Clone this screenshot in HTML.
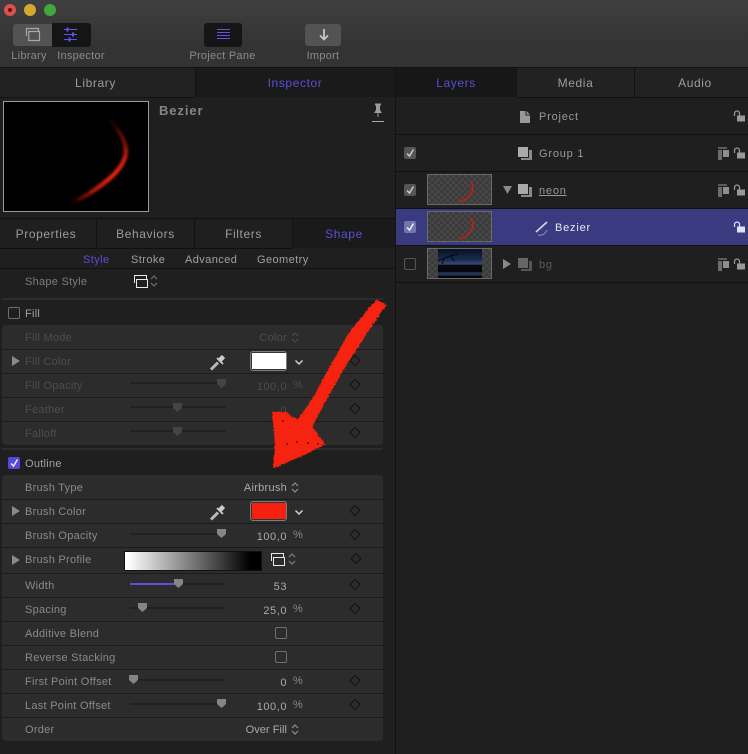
<!DOCTYPE html>
<html><head><meta charset="utf-8"><style>
html,body{margin:0;padding:0;background:#1e1e1e}
#p{position:relative;width:748px;height:754px;overflow:hidden;background:#1f1f1f;font:11px "Liberation Sans",sans-serif;letter-spacing:.27px;color:#8a8a8a}
#p div,#p span,#p svg{position:absolute}
.t{white-space:nowrap;line-height:14px;margin-top:1px}
.r{text-align:right}
.c{text-align:center}
.v{letter-spacing:.55px;margin-top:1px}
.sub{letter-spacing:.42px}
.lay{letter-spacing:.8px}
.tab{font-size:12px;letter-spacing:.6px;color:#9c9c9c;line-height:16px;text-align:center;white-space:nowrap}
.b{color:#5a4fd8}
.line{background:#111}
.hl{height:1px;left:2px;width:381px;background:#1b1b1b}
.panel{left:2px;width:381px;background:#2c2c2c;border-radius:4px}
.d{color:#4d4d4d}
.sl{height:2px;background:#212121;border-radius:1px}
.ck{width:10px;height:10px;border:1px solid #6e6e6e;border-radius:2px}
.row2{left:396px;width:352px;height:1px;background:#111}
.th{width:63px;height:29px;border:1px solid #6a6a6a;background:#464646;background-image:linear-gradient(45deg,#3b3b3b 25%,transparent 25%,transparent 75%,#3b3b3b 75%),linear-gradient(45deg,#3b3b3b 25%,transparent 25%,transparent 75%,#3b3b3b 75%);background-size:6px 6px;background-position:0 0,3px 3px}
</style></head><body><div id="p">

<!-- toolbar -->
<div style="left:0;top:0;width:748px;height:67px;background:linear-gradient(#3f3f3f,#333 70%)"></div>
<div style="left:4px;top:4px;width:12px;height:12px;border-radius:50%;background:#d9514d"></div>
<div style="left:8px;top:8px;width:4px;height:4px;border-radius:50%;background:#641010"></div>
<div style="left:24px;top:4px;width:12px;height:12px;border-radius:50%;background:#d4a92e"></div>
<div style="left:44px;top:4px;width:12px;height:12px;border-radius:50%;background:#3fa73f"></div>

<div style="left:13px;top:24px;width:39px;height:22px;background:#535353;border-radius:3px 0 0 3px"></div>
<div style="left:52px;top:23px;width:39px;height:24px;background:#151515;border-radius:0 3px 3px 0"></div>
<svg style="left:25px;top:27px" width="16" height="16" fill="none" stroke="#a8a8a8" stroke-width="1.200"><path d="M1.500 9V1.500H13.500V4"/><path d="M3.800 4.500H14.500V13.500H3.800Z"/></svg>
<svg style="left:63px;top:27px" width="16" height="16"><path d="M1 2.500H14M1 7.500H14M1 12.500H14" fill="none" stroke="#5f53ea"/><path d="M3.500 .5H5.500V4.500H3.500ZM9 5.500H11V9.500H9ZM5.500 10.500H7.500V14.500H5.500Z" fill="#5f53ea"/></svg>
<div class="t c" style="left:4px;top:48px;width:50px">Library</div>
<div class="t c" style="left:50px;top:48px;width:62px">Inspector</div>

<div style="left:204px;top:23px;width:38px;height:24px;background:#151515;border-radius:3px"></div>
<svg style="left:216px;top:28px" width="15" height="13" stroke="#5f53ea"><path d="M1 1.500H14M1 4.500H14M1 7.500H14M1 10.500H14"/></svg>
<div class="t c" style="left:180px;top:48px;width:85px">Project Pane</div>

<div style="left:305px;top:24px;width:36px;height:22px;background:#535353;border-radius:3px"></div>
<svg style="left:317px;top:28px" width="14" height="14" fill="none" stroke="#c6c6c6" stroke-width="1.800"><path d="M7 1V11M3 7.500L7 11.500L11 7.500"/></svg>
<div class="t c" style="left:300px;top:48px;width:46px">Import</div>

<div class="line" style="left:0;top:67px;width:748px;height:1px"></div>

<!-- left tabs -->
<div style="left:0;top:68px;width:195px;height:29px;background:#222"></div>
<div style="left:195px;top:68px;width:200px;height:29px;background:#1a1a1a"></div>
<div class="line" style="left:0;top:97px;width:195px;height:1px"></div>
<div class="line" style="left:195px;top:68px;width:1px;height:30px"></div>
<div class="tab" style="left:0;top:75px;width:191px">Library</div>
<div class="tab b" style="left:195px;top:75px;width:200px">Inspector</div>

<!-- vertical divider -->
<div class="line" style="left:395px;top:68px;width:1px;height:686px"></div>

<!-- preview -->
<div style="left:3px;top:101px;width:144px;height:109px;background:#000;border:1px solid #9a9a9a"></div>
<svg style="left:4px;top:102px" width="144" height="109">
<defs><filter id="bl" x="-30%" y="-30%" width="160%" height="160%"><feGaussianBlur stdDeviation="1.200"/></filter>
<linearGradient id="gr" gradientUnits="userSpaceOnUse" x1="108" y1="20" x2="68" y2="101"><stop offset="0" stop-color="#1c0300"/><stop offset=".3" stop-color="#d01c0a"/><stop offset=".55" stop-color="#f0240c"/><stop offset=".75" stop-color="#b8180a"/><stop offset="1" stop-color="#0c0100"/></linearGradient></defs>
<path d="M108 20C116 29 122 40 122 50C121 62 112 72 100 81C90 89 79 96 68 101" fill="none" stroke="url(#gr)" stroke-width="4.500" stroke-linecap="round" filter="url(#bl)"/>
</svg>
<div class="t" style="left:159px;top:102px;font-size:13px;font-weight:bold;color:#868686;letter-spacing:.9px;line-height:16px">Bezier</div>
<svg style="left:371px;top:103px" width="14" height="20"><path d="M4 .5H10V2L9 3V7L11 10H3L5 7V3L4 2Z" fill="#9c9c9c"/><path d="M7 10V14" stroke="#999"/><path d="M1 18.500H13" stroke="#aaa"/></svg>

<!-- sub tabs -->
<div class="line" style="left:0;top:218px;width:395px;height:1px"></div>
<div style="left:293px;top:219px;width:102px;height:29px;background:#1a1a1a"></div>
<div class="line" style="left:0;top:248px;width:293px;height:1px"></div>
<div class="line" style="left:96px;top:219px;width:1px;height:29px"></div>
<div class="line" style="left:194px;top:219px;width:1px;height:29px"></div>
<div class="line" style="left:292px;top:219px;width:1px;height:29px"></div>
<div class="tab" style="left:0;top:226px;width:92px">Properties</div>
<div class="tab" style="left:97px;top:226px;width:97px">Behaviors</div>
<div class="tab" style="left:195px;top:226px;width:97px">Filters</div>
<div class="tab b" style="left:293px;top:226px;width:102px">Shape</div>

<div class="t b sub" style="left:83px;top:252px">Style</div>
<div class="t sub" style="left:131px;top:252px;color:#a0a0a0">Stroke</div>
<div class="t sub" style="left:185px;top:252px;color:#a0a0a0">Advanced</div>
<div class="t sub" style="left:257px;top:252px;color:#a0a0a0">Geometry</div>
<div class="line" style="left:0;top:268px;width:395px;height:1px"></div>

<div class="t" style="left:25px;top:274px;color:#7c7c7c">Shape Style</div>
<svg style="left:134px;top:274px" width="25" height="15" fill="none" stroke="#e8e8e8"><path d="M.5 9V1.500H12.500V5"/><path d="M2.500 5.500H13.500V13.500H2.500Z"/><path d="M17 5L20 2L23 5M17 9L20 12L23 9" stroke="#666" stroke-width="1.300"/></svg>
<div style="left:2px;top:298px;width:381px;height:2px;background:#2c2c2c"></div>

<!-- Fill -->
<div class="ck" style="left:8px;top:307px"></div>
<div class="t" style="left:25px;top:306px;color:#a2a2a2">Fill</div>
<div class="panel" style="top:325px;height:120px"></div>
<div class="hl" style="top:349px"></div><div class="hl" style="top:373px"></div><div class="hl" style="top:397px"></div><div class="hl" style="top:421px"></div>
<div class="t d" style="left:25px;top:330px">Fill Mode</div>
<div class="t d" style="left:25px;top:354px">Fill Color</div>
<div class="t d" style="left:25px;top:378px">Fill Opacity</div>
<div class="t d" style="left:25px;top:402px">Feather</div>
<div class="t d" style="left:25px;top:426px">Falloff</div>
<div class="t d r" style="left:227px;top:330px;width:60px">Color</div>
<svg style="left:291px;top:332px" width="9" height="11" fill="none" stroke="#4d4d4d"><path d="M1 4L4 1L7 4M1 7L4 10L7 7"/></svg>
<svg style="left:12px;top:356px" width="9" height="10"><path d="M0 0L8 5L0 10Z" fill="#8a8a8a"/></svg>
<svg style="left:209px;top:354px" width="18" height="18" fill="none"><path d="M2 15.500L9 8.500" stroke="#b8b8b8" stroke-width="3"/><path d="M11 6L14.500 2.500" stroke="#cdcdcd" stroke-width="4.500"/><path d="M8 4L14 10" stroke="#cdcdcd" stroke-width="1.800"/></svg>
<div style="left:250px;top:351px;width:37px;height:20px;background:#333;border:1px solid #7c7c7c;border-radius:3px;box-sizing:border-box"></div>
<div style="left:252px;top:353px;width:34px;height:16px;background:#fff"></div>
<svg style="left:294px;top:359px" width="10" height="8" fill="none" stroke="#d0d0d0" stroke-width="1.500"><path d="M1.500 1.500L5 5L8.500 1.500"/></svg>
<div class="sl" style="left:130px;top:382px;width:96px"></div>
<div class="sl" style="left:130px;top:406px;width:96px"></div>
<div class="sl" style="left:130px;top:430px;width:96px"></div>
<svg style="left:216px;top:378px" width="11" height="11"><path d="M1 1H10V6L5.500 10L1 6Z" fill="#444"/></svg>
<svg style="left:172px;top:402px" width="11" height="11"><path d="M1 1H10V6L5.500 10L1 6Z" fill="#444"/></svg>
<svg style="left:172px;top:426px" width="11" height="11"><path d="M1 1H10V6L5.500 10L1 6Z" fill="#444"/></svg>
<div class="t d r v" style="left:227px;top:379px;width:60px">100,0</div>
<div class="t d" style="left:293px;top:377px">%</div>
<div class="t d r v" style="left:227px;top:403px;width:60px">0</div>

<div style="left:2px;top:448px;width:381px;height:2px;background:#2c2c2c"></div>

<!-- Outline -->
<div style="left:8px;top:457px;width:12px;height:12px;background:#5548e0;border-radius:2px"></div>
<svg style="left:8px;top:457px" width="12" height="12" fill="none" stroke="#eee" stroke-width="1.500"><path d="M3 6.500L5.500 9L9.500 2.500"/></svg>
<div class="t" style="left:25px;top:456px;color:#a2a2a2">Outline</div>
<div class="panel" style="top:475px;height:266px"></div>
<div class="hl" style="top:499px"></div><div class="hl" style="top:523px"></div><div class="hl" style="top:547px"></div><div class="hl" style="top:573px"></div><div class="hl" style="top:597px"></div><div class="hl" style="top:621px"></div><div class="hl" style="top:645px"></div><div class="hl" style="top:669px"></div><div class="hl" style="top:693px"></div><div class="hl" style="top:717px"></div>

<div class="t" style="left:25px;top:480px">Brush Type</div>
<div class="t" style="left:25px;top:504px">Brush Color</div>
<div class="t" style="left:25px;top:528px">Brush Opacity</div>
<div class="t" style="left:25px;top:552px">Brush Profile</div>
<div class="t" style="left:25px;top:578px">Width</div>
<div class="t" style="left:25px;top:602px">Spacing</div>
<div class="t" style="left:25px;top:626px">Additive Blend</div>
<div class="t" style="left:25px;top:650px">Reverse Stacking</div>
<div class="t" style="left:25px;top:674px">First Point Offset</div>
<div class="t" style="left:25px;top:698px">Last Point Offset</div>
<div class="t" style="left:25px;top:722px">Order</div>

<div class="t r" style="left:217px;top:480px;width:70px;color:#aaa">Airbrush</div>
<svg style="left:291px;top:482px" width="9" height="11" fill="none" stroke="#999"><path d="M1 4L4 1L7 4M1 7L4 10L7 7"/></svg>
<svg style="left:12px;top:506px" width="9" height="10"><path d="M0 0L8 5L0 10Z" fill="#8a8a8a"/></svg>
<svg style="left:209px;top:504px" width="18" height="18" fill="none"><path d="M2 15.500L9 8.500" stroke="#b8b8b8" stroke-width="3"/><path d="M11 6L14.500 2.500" stroke="#cdcdcd" stroke-width="4.500"/><path d="M8 4L14 10" stroke="#cdcdcd" stroke-width="1.800"/></svg>
<div style="left:250px;top:501px;width:37px;height:20px;background:#333;border:1px solid #7c7c7c;border-radius:3px;box-sizing:border-box"></div>
<div style="left:252px;top:503px;width:34px;height:16px;background:#f5200f"></div>
<svg style="left:294px;top:509px" width="10" height="8" fill="none" stroke="#d0d0d0" stroke-width="1.500"><path d="M1.500 1.500L5 5L8.500 1.500"/></svg>

<div class="sl" style="left:130px;top:533px;width:96px"></div>
<svg style="left:216px;top:528px" width="11" height="11"><path d="M1 1H10V6L5.500 10L1 6Z" fill="#858585"/></svg>
<div class="t r v" style="left:227px;top:529px;width:60px;color:#aaa">100,0</div>
<div class="t" style="left:293px;top:527px">%</div>

<svg style="left:12px;top:555px" width="9" height="10"><path d="M0 0L8 5L0 10Z" fill="#8a8a8a"/></svg>
<div style="left:124px;top:551px;width:138px;height:20px;background:linear-gradient(90deg,#fff 2%,#000 92%);box-sizing:border-box;border:1px solid #111"></div>
<svg style="left:271px;top:552px" width="28" height="15" fill="none" stroke="#e8e8e8"><path d="M.5 9V1.500H12.500V5"/><path d="M2.500 5.500H13.500V13.500H2.500Z"/><path d="M18 5L21 2L24 5M18 9L21 12L24 9" stroke="#777" stroke-width="1.300"/></svg>

<div class="sl" style="left:130px;top:583px;width:95px"></div>
<div style="left:130px;top:583px;width:48px;height:2px;background:#5a4fe0"></div>
<svg style="left:173px;top:578px" width="11" height="11"><path d="M1 1H10V6L5.500 10L1 6Z" fill="#858585"/></svg>
<div class="t r v" style="left:227px;top:579px;width:60px;color:#aaa">53</div>

<div class="sl" style="left:130px;top:607px;width:95px"></div>
<svg style="left:137px;top:602px" width="11" height="11"><path d="M1 1H10V6L5.500 10L1 6Z" fill="#858585"/></svg>
<div class="t r v" style="left:227px;top:603px;width:60px;color:#aaa">25,0</div>
<div class="t" style="left:293px;top:601px">%</div>

<div class="ck" style="left:275px;top:627px"></div>
<div class="ck" style="left:275px;top:651px"></div>

<div class="sl" style="left:130px;top:679px;width:95px"></div>
<svg style="left:128px;top:674px" width="11" height="11"><path d="M1 1H10V6L5.500 10L1 6Z" fill="#858585"/></svg>
<div class="t r v" style="left:227px;top:675px;width:60px;color:#aaa">0</div>
<div class="t" style="left:293px;top:673px">%</div>

<div class="sl" style="left:130px;top:703px;width:95px"></div>
<svg style="left:216px;top:698px" width="11" height="11"><path d="M1 1H10V6L5.500 10L1 6Z" fill="#858585"/></svg>
<div class="t r v" style="left:227px;top:699px;width:60px;color:#aaa">100,0</div>
<div class="t" style="left:293px;top:697px">%</div>

<div class="t r" style="left:217px;top:722px;width:70px;color:#aaa;letter-spacing:.05px">Over Fill</div>
<svg style="left:291px;top:724px" width="9" height="11" fill="none" stroke="#999"><path d="M1 4L4 1L7 4M1 7L4 10L7 7"/></svg>

<!-- keyframe diamonds -->
<svg style="left:348px;top:352px" width="15" height="370" fill="none" stroke="#131313"><path d="M7 3.500L12 8.500L7 13.500L2 8.500ZM7 27.500L12 32.500L7 37.500L2 32.500ZM7 51.500L12 56.500L7 61.500L2 56.500ZM7 75.500L12 80.500L7 85.500L2 80.500ZM7 153.500L12 158.500L7 163.500L2 158.500ZM7 177.500L12 182.500L7 187.500L2 182.500ZM7 227.500L12 232.500L7 237.500L2 232.500ZM7 251.500L12 256.500L7 261.500L2 256.500ZM7 323.500L12 328.500L7 333.500L2 328.500ZM7 347.500L12 352.500L7 357.500L2 352.500Z"/><path d="M8 201.500L13 206.500L8 211.500L3 206.500Z"/></svg>

<!-- right tabs -->
<div style="left:396px;top:68px;width:121px;height:29px;background:#171717"></div>
<div style="left:517px;top:68px;width:231px;height:29px;background:#222"></div>
<div class="line" style="left:517px;top:97px;width:231px;height:1px"></div>
<div class="line" style="left:634px;top:68px;width:1px;height:29px"></div>
<div class="tab b" style="left:396px;top:75px;width:120px">Layers</div>
<div class="tab" style="left:517px;top:75px;width:117px">Media</div>
<div class="tab" style="left:635px;top:75px;width:120px">Audio</div>

<!-- layers -->
<div class="row2" style="top:134px"></div>
<div class="row2" style="top:171px"></div>
<div class="row2" style="top:208px"></div>
<div class="row2" style="top:245px"></div>
<div class="row2" style="top:282px"></div>
<div style="left:396px;top:209px;width:352px;height:36px;background:#393a80"></div>

<svg style="left:520px;top:111px" width="11" height="12"><path d="M0 0H5.500V4.500H10V12H0Z" fill="#999"/><path d="M6.500 0L10 3.500H6.500Z" fill="#999"/></svg>
<div class="t lay" style="left:539px;top:109px;color:#9a9a9a">Project</div>

<div style="left:404px;top:147px;width:12px;height:12px;background:#555;border-radius:2px"></div>
<div style="left:404px;top:184px;width:12px;height:12px;background:#555;border-radius:2px"></div>
<div style="left:404px;top:221px;width:12px;height:12px;background:#7175b0;border-radius:2px"></div>
<svg style="left:404px;top:147px" width="12" height="12" fill="none" stroke="#c8c8c8" stroke-width="1.500"><path d="M3 6.500L5.500 9L9.500 2.500"/></svg>
<svg style="left:404px;top:184px" width="12" height="12" fill="none" stroke="#c8c8c8" stroke-width="1.500"><path d="M3 6.500L5.500 9L9.500 2.500"/></svg>
<svg style="left:404px;top:221px" width="12" height="12" fill="none" stroke="#eee" stroke-width="1.500"><path d="M3 6.500L5.500 9L9.500 2.500"/></svg>
<div class="ck" style="left:404px;top:258px;border-color:#555"></div>

<svg style="left:518px;top:147px" width="14" height="13"><path d="M0 0H10V10H0Z" fill="#aaa"/><path d="M11 3H14V13H3V11H11Z" fill="#8a8a8a"/></svg>
<div class="t lay" style="left:539px;top:146px;color:#9a9a9a">Group 1</div>

<div class="th" style="left:427px;top:174px"></div>
<svg style="left:428px;top:175px" width="63" height="29" fill="none"><path d="M43 6C46 12 45 17 42 20C39 24 35 26 31 27" stroke="#c81c10" stroke-width="1.500"/></svg>
<svg style="left:503px;top:186px" width="10" height="8"><path d="M0 0H9L4.500 8Z" fill="#8a8a8a"/></svg>
<svg style="left:518px;top:184px" width="14" height="13"><path d="M0 0H10V10H0Z" fill="#aaa"/><path d="M11 3H14V13H3V11H11Z" fill="#8a8a8a"/></svg>
<div class="t lay" style="left:539px;top:183px;color:#9a9a9a;text-decoration:underline">neon</div>

<div class="th" style="left:427px;top:211px"></div>
<svg style="left:428px;top:212px" width="63" height="29" fill="none"><path d="M43 6C46 12 45 17 42 20C39 24 35 26 31 27" stroke="#c81c10" stroke-width="1.500"/></svg>
<svg style="left:533px;top:220px" width="16" height="16" fill="none"><path d="M3 12L14 2" stroke="#d0d0e4" stroke-width="1.800"/><path d="M5 15C9 16 12 14 14 10" stroke="#8a8bc0"/></svg>
<div class="t lay" style="left:555px;top:220px;color:#e8e8f0">Bezier</div>

<div class="th" style="left:427px;top:248px"></div>
<div style="left:438px;top:249px;width:44px;height:29px;background:linear-gradient(#091022 0,#162a4e 35%,#364a70 52%,#08080e 56%,#06060c 78%,#243352 82%,#243352 90%,#050508 94%)"></div>
<svg style="left:438px;top:249px" width="44" height="29" fill="none" stroke="#05050a"><path d="M0 12L12 7L20 5M6 10L4 15M13 7L16 12"/></svg>
<svg style="left:503px;top:259px" width="9" height="10"><path d="M0 0L8 5L0 10Z" fill="#8a8a8a"/></svg>
<svg style="left:518px;top:258px" width="14" height="13"><path d="M0 0H10V10H0Z" fill="#666"/><path d="M11 3H14V13H3V11H11Z" fill="#555"/></svg>
<div class="t lay" style="left:539px;top:257px;color:#5a5a5a">bg</div>

<!-- layer right icons -->
<svg style="left:718px;top:147px" width="12" height="14"><path d="M0 0H9V2H0Z" fill="#5c5c5c"/><path d="M0 3H4V13H0Z" fill="#6c6c6c"/><path d="M5 3H11V10H5Z" fill="#8e8e8e"/></svg>
<svg style="left:718px;top:184px" width="12" height="14"><path d="M0 0H9V2H0Z" fill="#5c5c5c"/><path d="M0 3H4V13H0Z" fill="#6c6c6c"/><path d="M5 3H11V10H5Z" fill="#8e8e8e"/></svg>
<svg style="left:718px;top:258px" width="12" height="14"><path d="M0 0H9V2H0Z" fill="#5c5c5c"/><path d="M0 3H4V13H0Z" fill="#6c6c6c"/><path d="M5 3H11V10H5Z" fill="#8e8e8e"/></svg>
<svg style="left:733px;top:110px" width="13" height="12"><path d="M1.500 6V3.500A2.500 2.500 0 0 1 6.500 3.500V6" fill="none" stroke="#999" stroke-width="1.200"/><rect x="4" y="5.500" width="8" height="6" fill="#999"/></svg>
<svg style="left:733px;top:147px" width="13" height="12"><path d="M1.500 6V3.500A2.500 2.500 0 0 1 6.500 3.500V6" fill="none" stroke="#999" stroke-width="1.200"/><rect x="4" y="5.500" width="8" height="6" fill="#999"/></svg>
<svg style="left:733px;top:184px" width="13" height="12"><path d="M1.500 6V3.500A2.500 2.500 0 0 1 6.500 3.500V6" fill="none" stroke="#999" stroke-width="1.200"/><rect x="4" y="5.500" width="8" height="6" fill="#999"/></svg>
<svg style="left:733px;top:221px" width="13" height="12"><path d="M1.500 6V3.500A2.500 2.500 0 0 1 6.500 3.500V6" fill="none" stroke="#dfe0f0" stroke-width="1.200"/><rect x="4" y="5.500" width="8" height="6" fill="#dfe0f0"/></svg>
<svg style="left:733px;top:258px" width="13" height="12"><path d="M1.500 6V3.500A2.500 2.500 0 0 1 6.500 3.500V6" fill="none" stroke="#999" stroke-width="1.200"/><rect x="4" y="5.500" width="8" height="6" fill="#999"/></svg>

<!-- red arrow -->
<svg style="left:0;top:0" width="748" height="754">
<defs><filter id="rough" x="-10%" y="-10%" width="120%" height="120%" color-interpolation-filters="sRGB"><feTurbulence type="fractalNoise" baseFrequency=".5" numOctaves="2" seed="4"/><feDisplacementMap in="SourceGraphic" scale="3.500" xChannelSelector="R" yChannelSelector="G"/></filter></defs>
<path filter="url(#rough)" fill="#f5230f" stroke="#f5230f" stroke-width="2" stroke-linejoin="round" d="M377 301L385 305L366 333L344 367L325 400L311 427L324 444L300 456L274 467L276 443L273 413L285 413L298 421L314 398L331 366L350 333L370 308Z"/>
<g fill="#7a1208"><circle cx="283" cy="421" r="1"/><circle cx="287" cy="444" r="1"/><circle cx="297" cy="442" r="1"/><circle cx="318" cy="444" r="1"/><circle cx="308" cy="443" r="1"/></g>
</svg>

</div></body></html>
